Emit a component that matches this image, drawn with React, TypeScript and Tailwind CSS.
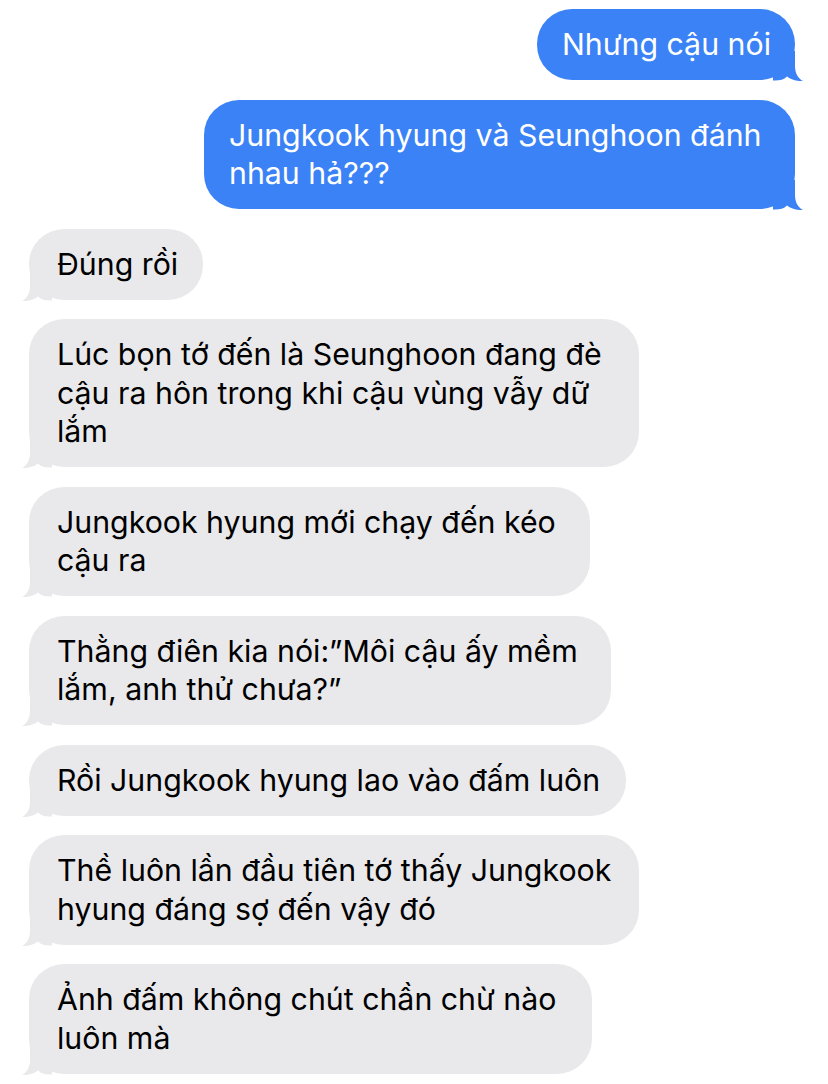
const font = { fontFamily: 'Inter, "Noto Sans", sans-serif' }

type Msg = { me: boolean; width: string; lines: string[] }

const messages: Msg[] = [
  { me: true, width: 'w-[258px]', lines: ['Nhưng cậu nói'] },
  { me: true, width: 'w-[591px]', lines: ['Jungkook hyung và Seunghoon đánh', 'nhau hả???'] },
  { me: false, width: 'w-[174px]', lines: ['Đúng rồi'] },
  {
    me: false,
    width: 'w-[610px]',
    lines: ['Lúc bọn tớ đến là Seunghoon đang đè', 'cậu ra hôn trong khi cậu vùng vẫy dữ', 'lắm'],
  },
  { me: false, width: 'w-[561px]', lines: ['Jungkook hyung mới chạy đến kéo', 'cậu ra'] },
  { me: false, width: 'w-[582px]', lines: ['Thằng điên kia nói:”Môi cậu ấy mềm', 'lắm, anh thử chưa?”'] },
  { me: false, width: 'w-[597px]', lines: ['Rồi Jungkook hyung lao vào đấm luôn'] },
  { me: false, width: 'w-[610px]', lines: ['Thề luôn lần đầu tiên tớ thấy Jungkook', 'hyung đáng sợ đến vậy đó'] },
  { me: false, width: 'w-[563px]', lines: ['Ảnh đấm không chút chần chừ nào', 'luôn mà'] },
]

function Tail({ me }: { me: boolean }) {
  // little hook at the bottom corner of the bubble
  if (me) {
    return (
      <svg
        className="absolute bottom-[-1px] right-[-8px] h-[30px] w-[30px]"
        viewBox="0 0 30 30"
        fill="#3b82f7"
      >
        <path d="M22 0 L22 15 C22 22 25 27.5 30 30 C24 30.5 18 28.5 14 25.5 C11 28.5 7 29.5 2 29.5 L0 29.5 L0 0 Z" />
      </svg>
    )
  }
  return (
    <svg className="absolute bottom-[-1px] left-[-7px] h-[30px] w-[30px]" viewBox="0 0 30 30" fill="#e9e9eb">
      <path d="M8 0 L8 15 C8 22 5 27.5 0 30 C6 30.5 12 28.5 16 25.5 C19 28.5 23 29.5 28 29.5 L30 29.5 L30 0 Z" />
    </svg>
  )
}

function Bubble({ msg }: { msg: Msg }) {
  return (
    <div className={msg.me ? 'flex justify-end' : 'flex justify-start'}>
      <div
        className={
          'relative rounded-[35px] py-[16.25px] text-[30.3px] leading-[38.5px] whitespace-nowrap ' +
          msg.width +
          (msg.me ? ' bg-[#3b82f7] pl-[25px] text-white' : ' bg-[#e9e9eb] pl-[28px] text-black')
        }
      >
        <Tail me={msg.me} />
        <div className="relative">
          {msg.lines.map((l, i) => (
            <div key={i}>{l}</div>
          ))}
        </div>
      </div>
    </div>
  )
}

export default function App() {
  return (
    <div className="min-h-[1084px] w-[828px] bg-white pt-[9px] pl-[29px] pr-[33px]" style={font}>
      <div className="flex flex-col gap-[19.5px]">
        {messages.map((m, i) => (
          <Bubble key={i} msg={m} />
        ))}
      </div>
    </div>
  )
}
